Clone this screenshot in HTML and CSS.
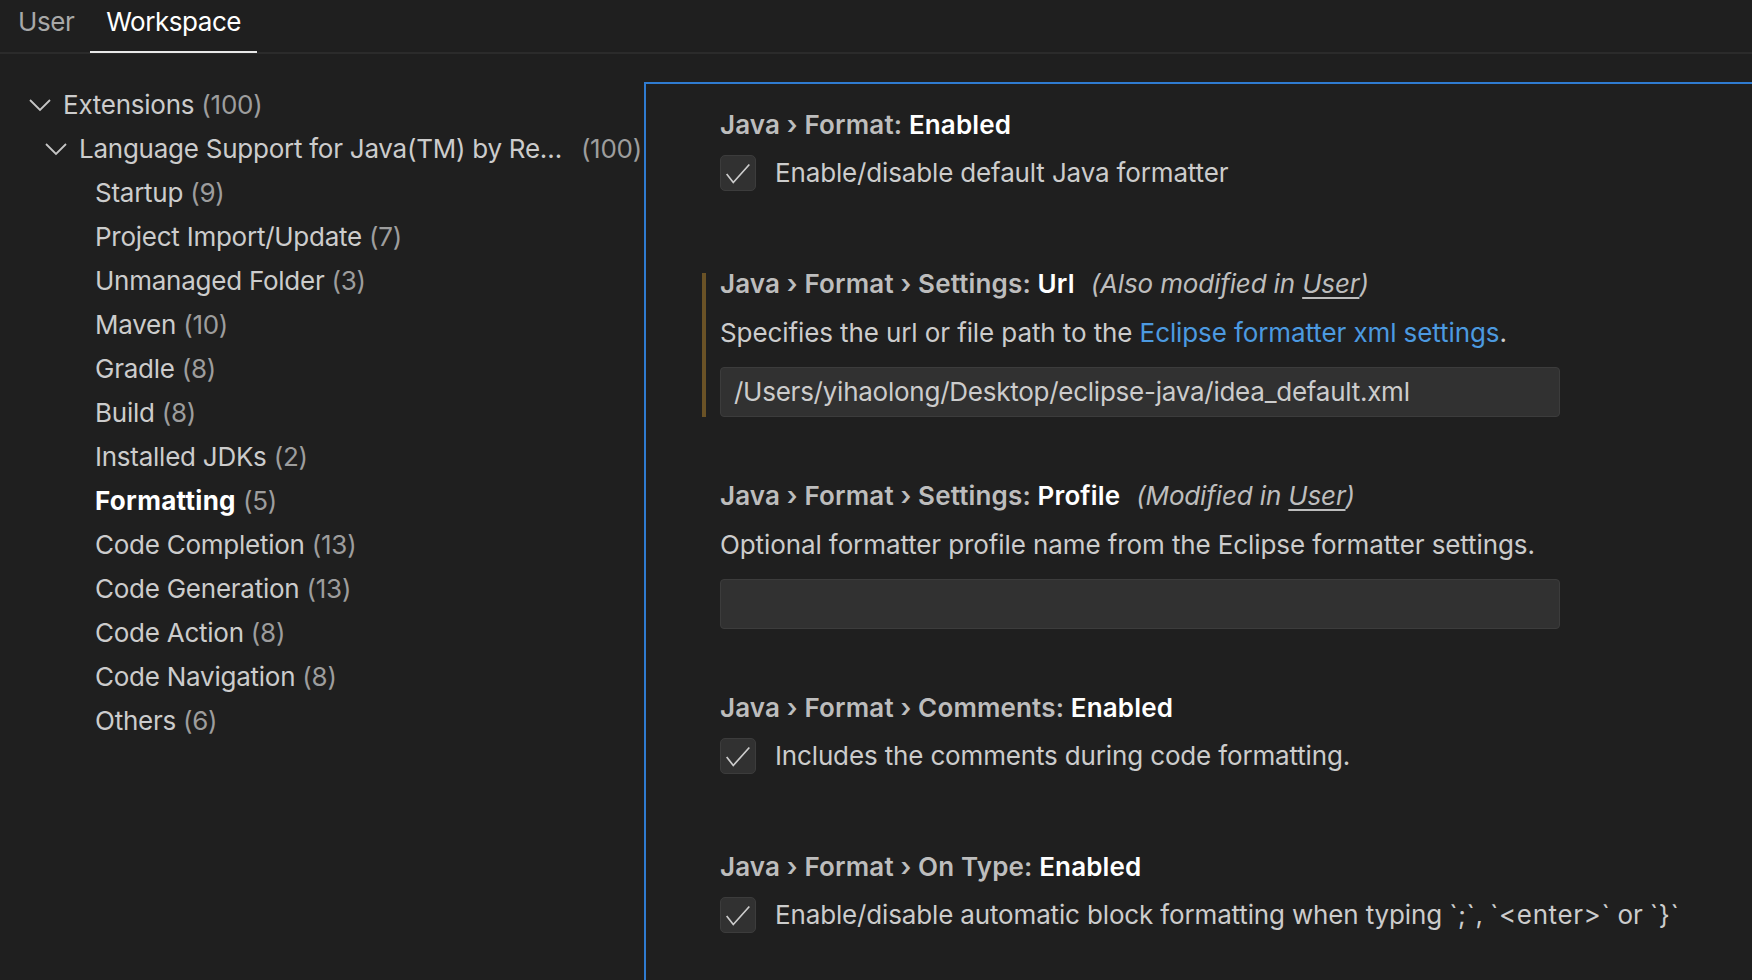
FILE: index.html
```html
<!DOCTYPE html>
<html>
<head>
<meta charset="utf-8">
<link rel="stylesheet" href="styles.css">
</head>
<body>
<div class="header">
  <div class="tab">User</div>
  <div class="tab active">Workspace</div>
</div>
<div class="main">
  <div class="tree">
    <div class="row lvl0">
      <svg class="chev" viewBox="0 0 16 16"><path d="M3 5.5 L8 10.5 L13 5.5"/></svg>
      <span class="label">Extensions</span><span class="count">&nbsp;(100)</span>
    </div>
    <div class="row lvl1">
      <svg class="chev" viewBox="0 0 16 16"><path d="M3 5.5 L8 10.5 L13 5.5"/></svg>
      <span class="label grow">Language Support for Java(TM) by Re…</span><span class="count">(100)</span>
    </div>
    <div class="row lvl2"><span class="label">Startup</span><span class="count">&nbsp;(9)</span></div>
    <div class="row lvl2"><span class="label">Project Import/Update</span><span class="count">&nbsp;(7)</span></div>
    <div class="row lvl2"><span class="label">Unmanaged Folder</span><span class="count">&nbsp;(3)</span></div>
    <div class="row lvl2"><span class="label">Maven</span><span class="count">&nbsp;(10)</span></div>
    <div class="row lvl2"><span class="label">Gradle</span><span class="count">&nbsp;(8)</span></div>
    <div class="row lvl2"><span class="label">Build</span><span class="count">&nbsp;(8)</span></div>
    <div class="row lvl2"><span class="label">Installed JDKs</span><span class="count">&nbsp;(2)</span></div>
    <div class="row lvl2 selected"><span class="label">Formatting</span><span class="count">&nbsp;(5)</span></div>
    <div class="row lvl2"><span class="label">Code Completion</span><span class="count">&nbsp;(13)</span></div>
    <div class="row lvl2"><span class="label">Code Generation</span><span class="count">&nbsp;(13)</span></div>
    <div class="row lvl2"><span class="label">Code Action</span><span class="count">&nbsp;(8)</span></div>
    <div class="row lvl2"><span class="label">Code Navigation</span><span class="count">&nbsp;(8)</span></div>
    <div class="row lvl2"><span class="label">Others</span><span class="count">&nbsp;(6)</span></div>
  </div>
  <div class="list">
    <div class="setting bool">
      <div class="contents">
        <div class="title"><span class="cat">Java › Format: </span><span class="name">Enabled</span></div>
        <div class="check-row">
          <div class="checkbox"><svg viewBox="0 0 36 36"><polyline points="6,19 13,28 30,9"/></svg></div>
          <span class="desc-text">Enable/disable default Java formatter</span>
        </div>
      </div>
    </div>
    <div class="setting text">
      <div class="contents modified">
        <div class="title"><span class="cat">Java › Format › Settings: </span><span class="name">Url</span><span class="note">(Also modified in <u>User</u>)</span></div>
        <div class="desc">Specifies the url or file path to the <span class="link">Eclipse formatter xml settings</span>.</div>
        <div class="input">/Users/yihaolong/Desktop/eclipse-java/idea_default.xml</div>
      </div>
    </div>
    <div class="setting text">
      <div class="contents">
        <div class="title"><span class="cat">Java › Format › Settings: </span><span class="name">Profile</span><span class="note">(Modified in <u>User</u>)</span></div>
        <div class="desc">Optional formatter profile name from the Eclipse formatter settings.</div>
        <div class="input"></div>
      </div>
    </div>
    <div class="setting bool">
      <div class="contents">
        <div class="title"><span class="cat">Java › Format › Comments: </span><span class="name">Enabled</span></div>
        <div class="check-row">
          <div class="checkbox"><svg viewBox="0 0 36 36"><polyline points="6,19 13,28 30,9"/></svg></div>
          <span class="desc-text">Includes the comments during code formatting.</span>
        </div>
      </div>
    </div>
    <div class="setting bool">
      <div class="contents">
        <div class="title"><span class="cat">Java › Format › On Type: </span><span class="name">Enabled</span></div>
        <div class="check-row">
          <div class="checkbox"><svg viewBox="0 0 36 36"><polyline points="6,19 13,28 30,9"/></svg></div>
          <span class="desc-text">Enable/disable automatic block formatting when typing <span class="tick">`;`</span>, <span class="tick">`&lt;enter&gt;`</span> or <span class="tick">`}`</span></span>
        </div>
      </div>
    </div>
  </div>
</div>
</body>
</html>
```
FILE: styles.css
```css
html, body {
  margin: 0;
  padding: 0;
  background: #1f1f1f;
  height: 980px;
  overflow: hidden;
}
body {
  font-family: Inter, "Liberation Sans", sans-serif;
  font-size: 26px;
  letter-spacing: -0.25px;
  color: #cccccc;
}
.header {
  display: flex;
  align-items: flex-start;
  height: 52px;
  padding-left: 2px;
  border-bottom: 2px solid #2b2b2b;
}
.tab {
  box-sizing: border-box;
  height: 52px;
  padding: 0 16px;
  line-height: 44px;
  letter-spacing: -0.45px;
  color: #a8a8a8;
}
.tab.active {
  height: 53px;
  color: #ffffff;
  border-bottom: 2px solid #e8e8e8;
}
.main {
  display: flex;
  height: 926px;
}
.tree {
  width: 644px;
  flex: none;
  padding-top: 29px;
  box-sizing: border-box;
}
.row {
  display: flex;
  align-items: center;
  height: 44px;
  line-height: 44px;
  white-space: nowrap;
  padding-right: 2px;
}
.row.lvl0 { padding-left: 24px; }
.row.lvl1 { padding-left: 40px; }
.row.lvl2 { padding-left: 95px; }
.chev {
  width: 32px;
  height: 32px;
  flex: none;
  margin-right: 7px;
  fill: none;
  stroke: #c5c5c5;
  stroke-width: 0.9;
}
.label { color: #cccccc; }
.label.grow { flex: 1; overflow: hidden; }
.count { color: #9d9d9d; }
.selected .label { color: #ffffff; font-weight: 700; letter-spacing: 0.3px; }
.list {
  flex: 1;
  margin-top: 28px;
  border-top: 2px solid #2f7bd0;
  border-left: 2px solid #2f7bd0;
}
.setting {
  padding: 19px 0 48px 56px;
}
.setting.text { padding-bottom: 38px; }
.contents {
  display: flex;
  flex-direction: column;
  border-left: 4px solid transparent;
  padding-left: 14px;
}
.contents.modified {
  border-left-color: #6a5226;
  margin-top: 11px;
}
.contents.modified .title { margin-top: -11px; }
.title {
  height: 44px;
  line-height: 44px;
  white-space: nowrap;
  font-weight: 600;
  letter-spacing: 0.15px;
}
.cat { color: #bdbdbd; }
.name { color: #ffffff; }
.note {
  font-weight: 400;
  font-style: italic;
  color: #bdbdbd;
  margin-left: 16px;
  letter-spacing: -0.15px;
}
.note u { text-underline-offset: 4px; }
.desc {
  margin-top: 5px;
  height: 44px;
  line-height: 44px;
  white-space: nowrap;
  letter-spacing: -0.1px;
}
.link { color: #4c9ae0; }
.input {
  margin-top: 12px;
  box-sizing: border-box;
  width: 840px;
  height: 50px;
  line-height: 48px;
  background: #313131;
  border: 1px solid #3c3c3c;
  border-radius: 4px;
  padding-left: 13px;
  color: #cccccc;
  white-space: nowrap;
}
.check-row {
  margin-top: 4px;
  height: 44px;
  display: flex;
  align-items: center;
  white-space: nowrap;
}
.checkbox {
  width: 36px;
  height: 36px;
  box-sizing: border-box;
  background: #313131;
  border: 1px solid #3c3c3c;
  border-radius: 5px;
  margin-right: 19px;
  flex: none;
}
.checkbox svg {
  display: block;
  width: 34px;
  height: 34px;
  fill: none;
  stroke: #cccccc;
  stroke-width: 1.8;
}
.desc-text { line-height: 44px; letter-spacing: -0.15px; }
.tick { letter-spacing: 0.6px; }
```
